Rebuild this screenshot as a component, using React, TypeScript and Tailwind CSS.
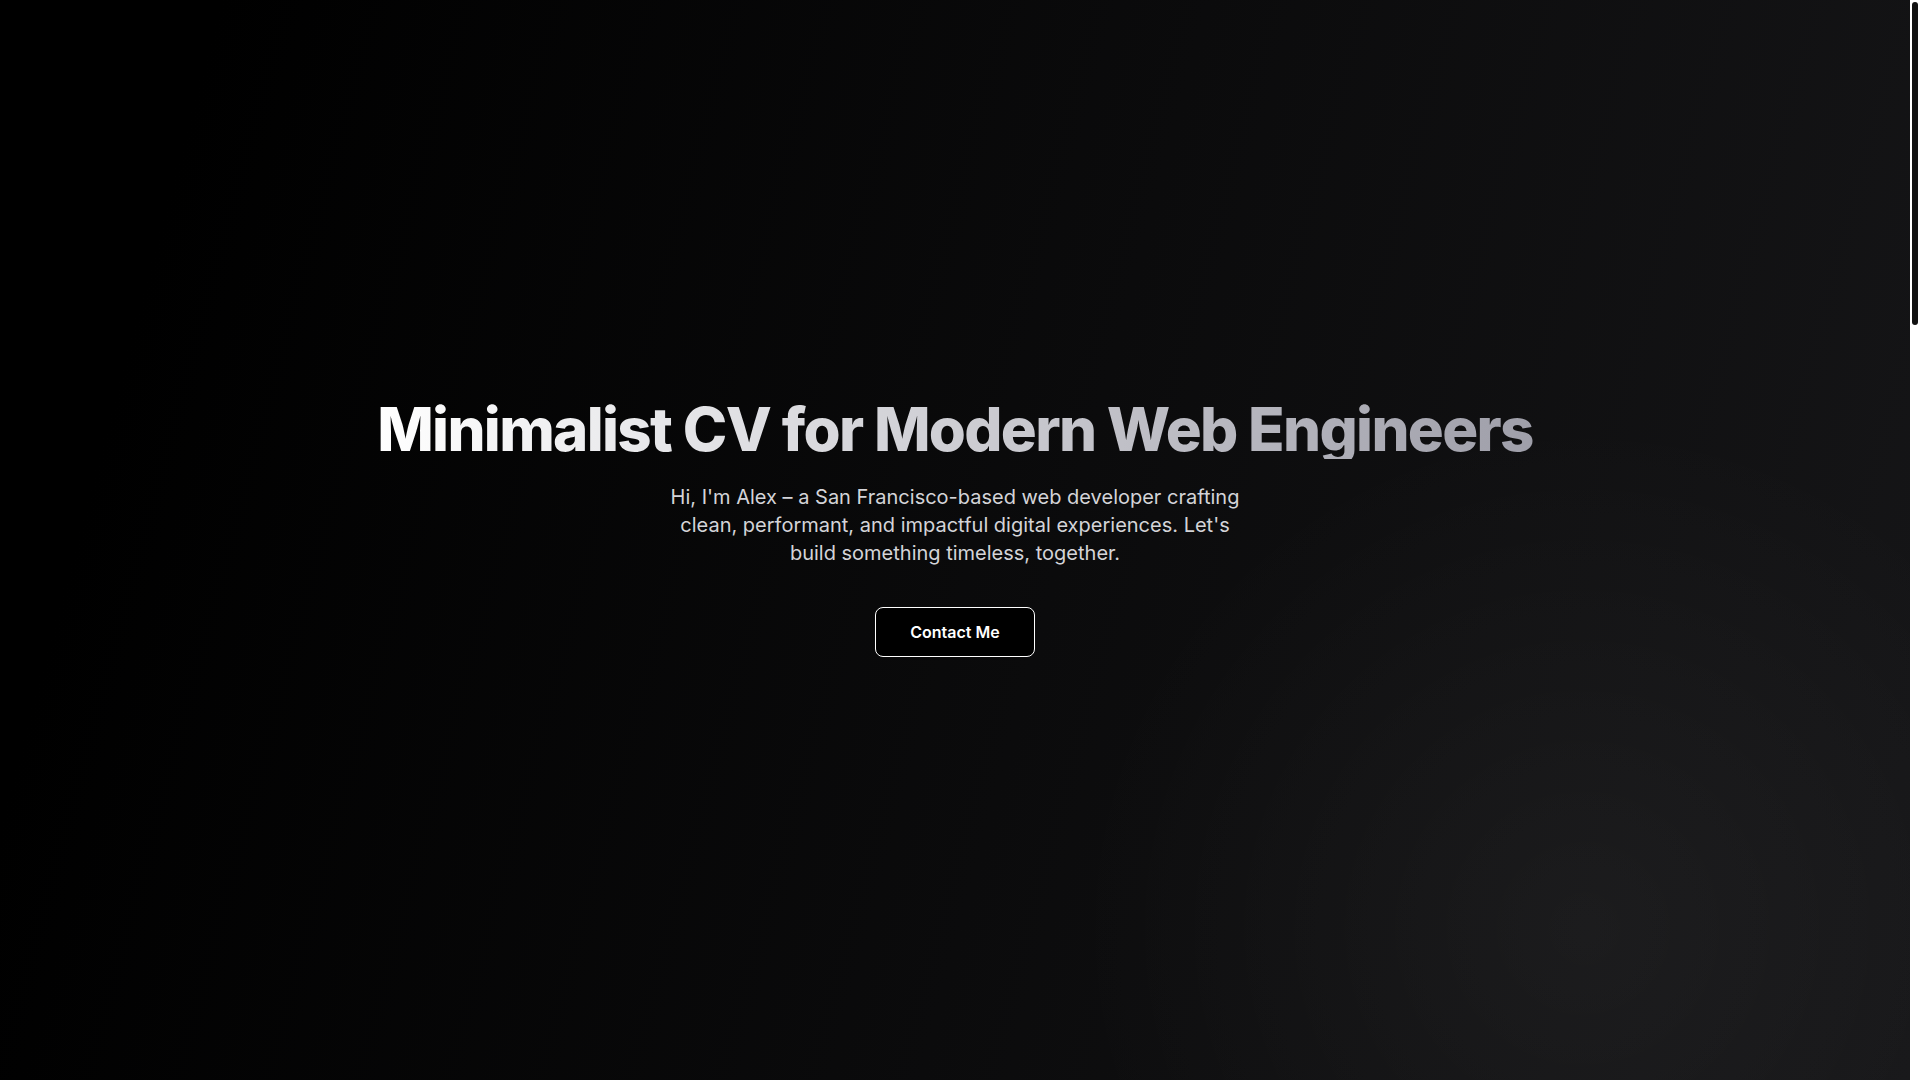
import React from "react";

export default function App() {
  return (
    <div className="flex h-screen w-full overflow-hidden bg-black font-['Inter','Noto_Sans',sans-serif] text-white">
      <main className="flex min-w-0 flex-1 flex-col items-center justify-center bg-[image:radial-gradient(circle_at_83%_86%,rgba(255,255,255,0.045),transparent_28%),linear-gradient(105deg,#000000_10%,#161618)] px-6 pb-6 text-center">
        <h1 className="bg-linear-to-r from-white to-zinc-400 bg-clip-text text-6xl font-extrabold leading-none tracking-[-0.028em] text-transparent">
          Minimalist CV for Modern Web Engineers
        </h1>
        <p className="mt-6 max-w-xl text-xl text-zinc-300">
          Hi, I'm Alex – a San Francisco-based web developer crafting clean, performant, and impactful digital experiences. Let's build something timeless, together.
        </p>
        <button className="mt-10 rounded-lg border border-white bg-black px-[34px] py-3 text-base font-semibold text-white">
          Contact Me
        </button>
      </main>
      <div className="flex w-[10px] shrink-0 flex-col bg-white px-[2px] pt-[2px]">
        <div className="h-[323px] w-full rounded-full bg-[#111111]" />
      </div>
    </div>
  );
}
